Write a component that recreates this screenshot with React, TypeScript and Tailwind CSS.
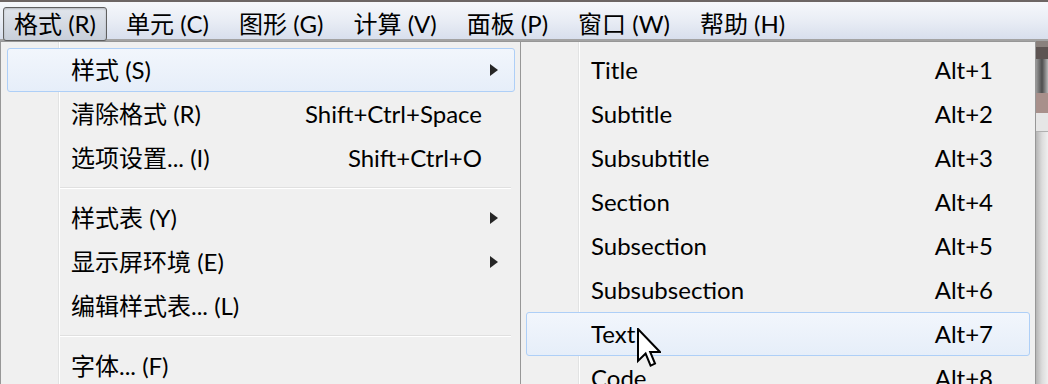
import { ReactNode } from "react";

// 菜单栏条目
const menuBar = ["格式 (R)", "单元 (C)", "图形 (G)", "计算 (V)", "面板 (P)", "窗口 (W)", "帮助 (H)"];

type Entry =
  | { kind: "item"; label: string; shortcut?: string; arrow?: boolean; active?: boolean }
  | { kind: "sep" };

const formatMenu: Entry[] = [
  { kind: "item", label: "样式 (S)", arrow: true, active: true },
  { kind: "item", label: "清除格式 (R)", shortcut: "Shift+Ctrl+Space" },
  { kind: "item", label: "选项设置... (I)", shortcut: "Shift+Ctrl+O" },
  { kind: "sep" },
  { kind: "item", label: "样式表 (Y)", arrow: true },
  { kind: "item", label: "显示屏环境 (E)", arrow: true },
  { kind: "item", label: "编辑样式表... (L)" },
  { kind: "sep" },
  { kind: "item", label: "字体... (F)" },
];

const styleMenu: Entry[] = [
  { kind: "item", label: "Title", shortcut: "Alt+1" },
  { kind: "item", label: "Subtitle", shortcut: "Alt+2" },
  { kind: "item", label: "Subsubtitle", shortcut: "Alt+3" },
  { kind: "item", label: "Section", shortcut: "Alt+4" },
  { kind: "item", label: "Subsection", shortcut: "Alt+5" },
  { kind: "item", label: "Subsubsection", shortcut: "Alt+6" },
  { kind: "item", label: "Text", shortcut: "Alt+7", active: true },
  { kind: "item", label: "Code", shortcut: "Alt+8" },
];

function Arrow() {
  return (
    <svg width="8" height="12" viewBox="0 0 8 12" className="shrink-0">
      <path d="M0 0 L8 6 L0 12 Z" fill="#262626" />
    </svg>
  );
}

function MenuRow({ entry, gutter, sepLeft, padRight }: { entry: Entry; gutter: string; sepLeft: string; padRight: string }) {
  if (entry.kind === "sep") {
    return (
      <div className={`h-[16px] pt-[7px] pr-[4px] ${sepLeft}`}>
        <div className="h-[1px] bg-[#e0e0e0]" />
        <div className="h-[1px] bg-white" />
      </div>
    );
  }
  return (
    <div
      className={`flex h-[44px] items-center rounded-[3px] border ${
        entry.active
          ? "border-[#aecff7] bg-gradient-to-b from-[#f2f6fc] to-[#e6eef9]"
          : "border-transparent"
      }`}
    >
      <div className={`${gutter} shrink-0`} />
      <span className="flex-1 whitespace-nowrap">{entry.label}</span>
      {entry.shortcut && <span className={`whitespace-nowrap ${padRight}`}>{entry.shortcut}</span>}
      {entry.arrow && (
        <div className="pr-[16px]">
          <Arrow />
        </div>
      )}
    </div>
  );
}

function Menu({ children, className }: { children: ReactNode; className: string }) {
  return (
    <div className={`absolute top-[41px] h-[360px] border border-[#979797] bg-[#f0f0f0] ${className}`}>
      {children}
    </div>
  );
}

export default function App() {
  return (
    <div className="relative h-[384px] w-[1048px] overflow-hidden bg-[#e8e8e8] font-['Lato','Noto_Sans_CJK_SC',sans-serif] text-[24px] leading-[30px] text-black">
      {/* 菜单栏 */}
      <div className="h-[2px] bg-[#6d6664]" />
      <div className="flex h-[39px] gap-[8px] border-b-2 border-[#a3a3a3] bg-gradient-to-b from-[#f6f8fb] via-[#e9edf5] to-[#d8dfed] pl-[3px] pt-[5px]">
        {menuBar.map((m, i) => (
          <div
            key={m}
            className={`flex h-[34px] items-center rounded-[3px] border px-[10px] ${
              i === 0
                ? "border-[#5f5f5f] bg-gradient-to-b from-[#e1e5ec] to-[#c8cfda] shadow-[inset_0_1px_2px_rgba(0,0,0,0.2)]"
                : "border-transparent"
            }`}
          >
            {m}
          </div>
        ))}
      </div>

      {/* 背景窗口的右边缘 */}
      <div className="absolute right-0 top-[41px] flex h-[343px] w-[12px] flex-col">
        <div className="h-[6px] bg-[#8a817d]" />
        <div className="h-[12px] bg-[#5d5452]" />
        <div className="h-[34px] bg-gradient-to-r from-[#9a9a9a] via-[#4e4e4e] to-[#b8b8b8]" />
        <div className="h-[20px] bg-[#a8908b]" />
        <div className="h-[18px] bg-[#e6e6e6]" />
        <div className="h-[1px] bg-[#b0b0b0]" />
        <div className="flex-1 bg-gradient-to-r from-[#b5b5b5] via-[#dcdcdc] to-[#efefef]" />
      </div>

      {/* 格式 菜单 */}
      <Menu className="left-0 w-[522px] px-[6px] pt-[6px]">
        <div className="absolute bottom-0 left-[57px] top-0 w-[2px] border-l border-[#e2e3e3] bg-white" />
        <div className="relative flex flex-col">
          {formatMenu.map((e, i) => (
            <MenuRow key={i} entry={e} gutter="w-[63px]" sepLeft="pl-[53px]" padRight="pr-[32px]" />
          ))}
        </div>
      </Menu>

      {/* 样式 子菜单 */}
      <Menu className="left-[520px] w-[516px] px-[5px] pt-[6px]">
        <div className="absolute bottom-0 left-[57px] top-0 w-[2px] border-l border-[#e2e3e3] bg-white" />
        <div className="relative flex flex-col">
          {styleMenu.map((e, i) => (
            <MenuRow key={i} entry={e} gutter="w-[64px]" sepLeft="pl-[54px]" padRight="pr-[36px]" />
          ))}
        </div>
      </Menu>

      {/* 鼠标指针 */}
      <svg className="absolute left-[637px] top-[328px]" width="24" height="40" viewBox="0 0 12 20">
        <path
          d="M0.5 0.5 L0.5 16.5 L4.3 12.8 L6.8 18.8 L9 17.8 L6.6 12 L11.5 12 Z"
          fill="white"
          stroke="black"
          strokeWidth="1"
          strokeLinejoin="miter"
        />
      </svg>
    </div>
  );
}
